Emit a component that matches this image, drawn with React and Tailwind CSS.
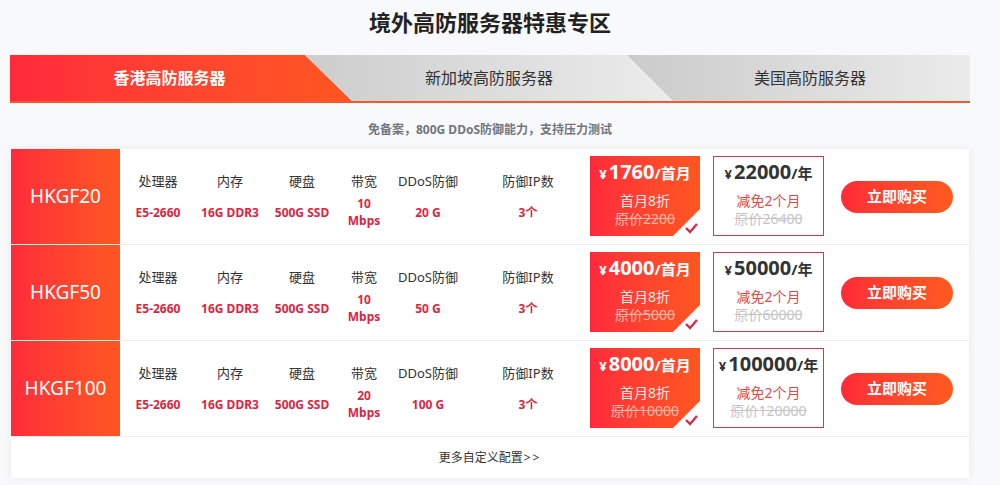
const plans = [
  {
    name: 'HKGF20',
    bw: '10',
    ddos: '20 G',
    month: '1760',
    monthOrig: '2200',
    year: '22000',
    yearOrig: '26400',
  },
  {
    name: 'HKGF50',
    bw: '10',
    ddos: '50 G',
    month: '4000',
    monthOrig: '5000',
    year: '50000',
    yearOrig: '60000',
  },
  {
    name: 'HKGF100',
    bw: '20',
    ddos: '100 G',
    month: '8000',
    monthOrig: '10000',
    year: '100000',
    yearOrig: '120000',
  },
];

const Spec = ({ label, width, children }) => (
  <div className={`flex flex-col items-center ${width}`}>
    <div className="text-[13px] leading-[20px] text-[#333]">{label}</div>
    <div className="mt-[4px] h-[34px] flex flex-col items-center justify-center text-[12px] leading-[17px] font-bold text-[#e0243f] text-center">
      {children}
    </div>
  </div>
);

// white corner with the selected tick
const CornerCheck = () => (
  <svg className="absolute right-0 bottom-0" width="27" height="27" viewBox="0 0 27 27">
    <polygon points="27,0 27,27 0,27" fill="#ffffff" />
    <polyline points="13,19 17,23 24,15" fill="none" stroke="#e0284a" strokeWidth="2.4" />
  </svg>
);

const PlanRow = ({ plan }) => (
  <div className="flex h-[96px] border-b border-[#ececec]">
    {/* model name */}
    <div className="w-[109px] h-[95px] flex items-center justify-center bg-gradient-to-r from-[#ff2a3a] to-[#ff5620] text-white text-[19px]">
      {plan.name}
    </div>

    {/* specs */}
    <div className="flex pt-[22px] pl-[2px]">
      <Spec label="处理器" width="w-[72px]">E5-2660</Spec>
      <Spec label="内存" width="w-[72px]">16G DDR3</Spec>
      <Spec label="硬盘" width="w-[72px]">500G SSD</Spec>
      <Spec label="带宽" width="w-[52px]">
        <span>{plan.bw}</span>
        <span>Mbps</span>
      </Spec>
      <Spec label="DDoS防御" width="w-[76px]">{plan.ddos}</Spec>
      <Spec label="防御IP数" width="w-[124px]">3个</Spec>
    </div>

    {/* monthly price */}
    <div className="self-center relative w-[110px] h-[80px] mt-[-1px] bg-gradient-to-r from-[#ff2a3a] to-[#ff5620] text-white flex flex-col items-center pt-[4px] overflow-hidden">
      <div className="leading-[24px] font-bold whitespace-nowrap">
        <span className="text-[13px] mr-[2px]">¥</span>
        <span className="text-[20px]">{plan.month}</span>
        <span className="text-[15px]">/首月</span>
      </div>
      <div className="mt-[6px] text-[14px] leading-[18px] text-[#ffe6dc]">首月8折</div>
      <div className="text-[14px] leading-[18px] text-[#ffb9a6] line-through">原价{plan.monthOrig}</div>
      <CornerCheck />
    </div>

    {/* yearly price */}
    <div className="self-center ml-[13px] w-[111px] h-[80px] mt-[-1px] border border-[#d2385a] bg-white flex flex-col items-center pt-[3px]">
      <div className="leading-[24px] font-bold text-[#333] whitespace-nowrap">
        <span className="text-[13px] mr-[2px]">¥</span>
        <span className="text-[20px]">{plan.year}</span>
        <span className="text-[15px]">/年</span>
      </div>
      <div className="mt-[6px] text-[14px] leading-[18px] text-[#e8464e]">减免2个月</div>
      <div className="text-[14px] leading-[18px] text-[#c4c4c4] line-through">原价{plan.yearOrig}</div>
    </div>

    <button className="self-center ml-[17px] w-[112px] h-[32px] rounded-full bg-gradient-to-r from-[#ff2a36] to-[#ff5a1e] text-white text-[15px] font-bold">
      立即购买
    </button>
  </div>
);

export default function App() {
  return (
    <div className="min-h-screen bg-[#f8f9fb] font-['Noto_Sans','Noto_Sans_CJK_SC',sans-serif]">
      <div className="ml-[10px] w-[960px] pt-[8px]">
        <h2 className="text-center text-[22px] leading-[28px] font-bold text-[#222]">
          境外高防服务器特惠专区
        </h2>

        {/* region tabs */}
        <div className="mt-[19px] flex h-[48px] border-b-2 border-[#f15a2b]">
          <div className="w-[342px] h-[46px] pr-[23px] flex items-center justify-center bg-gradient-to-r from-[#ff2a3a] to-[#ff5620] text-white text-[16px] font-bold [clip-path:polygon(0_0,295px_0,100%_100%,0_100%)]">
            香港高防服务器
          </div>
          <div className="ml-[-47px] w-[368px] h-[46px] flex items-center justify-center bg-gradient-to-r from-[#cdcdcd] to-[#ececec] text-[#333] text-[16px] [clip-path:polygon(0_0,322px_0,100%_100%,47px_100%)]">
            新加坡高防服务器
          </div>
          <div className="ml-[-46px] w-[343px] h-[46px] pl-[23px] flex items-center justify-center bg-gradient-to-r from-[#cbcbcb] to-[#ebebeb] text-[#333] text-[16px] [clip-path:polygon(0_0,100%_0,100%_100%,46px_100%)]">
            美国高防服务器
          </div>
        </div>

        <p className="mt-[18px] text-center text-[12px] leading-[18px] font-bold text-[#72767e]">
          免备案，800G DDoS防御能力，支持压力测试
        </p>

        {/* plan list */}
        <div className="mt-[10px] ml-[1px] w-[958px] bg-white shadow-[0_0_8px_rgba(0,0,0,0.07)]">
          {plans.map((p) => (
            <PlanRow key={p.name} plan={p} />
          ))}
          <div className="h-[41px] flex items-center justify-center text-[12px] text-[#333]">
            更多自定义配置<span className="tracking-[2px] ml-[1px]">&gt;&gt;</span>
          </div>
        </div>
      </div>
    </div>
  );
}
